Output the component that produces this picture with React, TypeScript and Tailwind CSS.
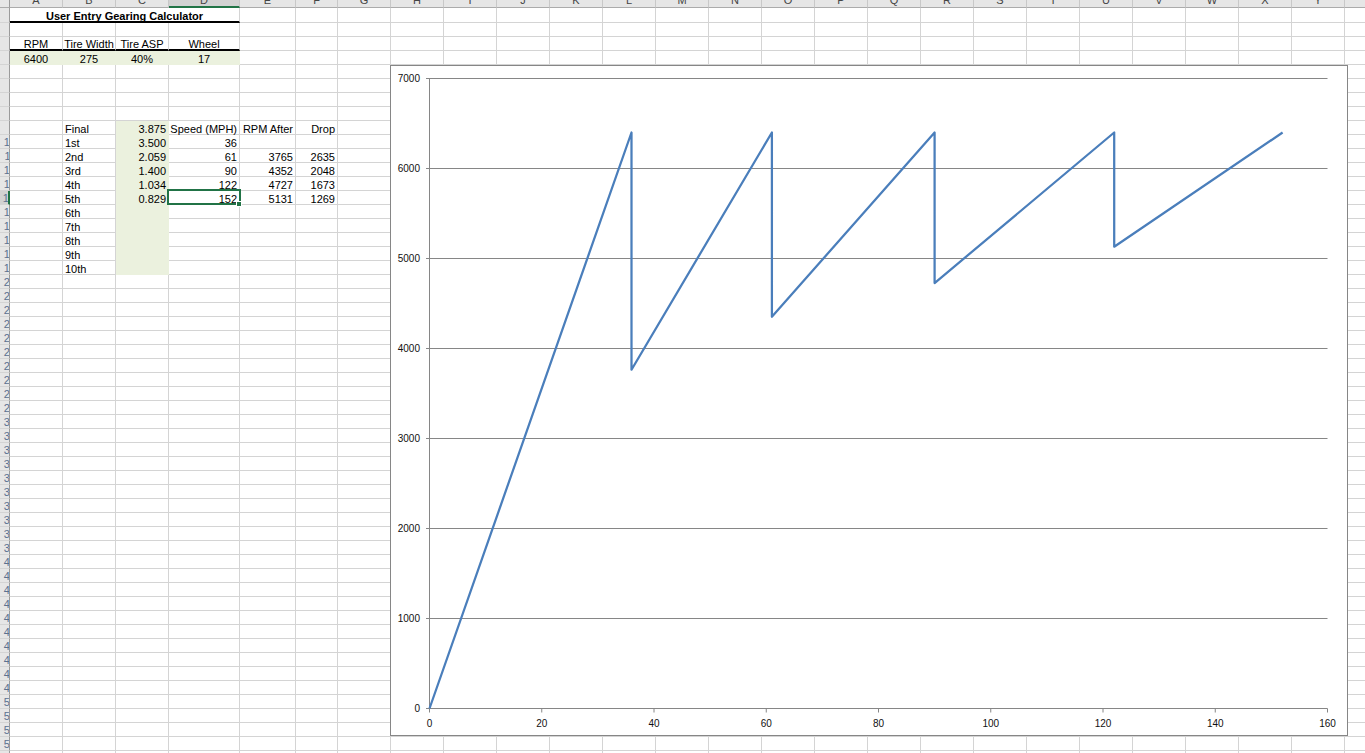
import clsx from "clsx";

type Col = { key: string; w: string };
type Cell = { v: string; align?: "l" | "c" | "r" };

const COLS: Col[] = [
  { key: "A", w: "w-[53px]" },
  { key: "B", w: "w-[53px]" },
  { key: "C", w: "w-[53px]" },
  { key: "D", w: "w-[71px]" },
  { key: "E", w: "w-[56px]" },
  { key: "F", w: "w-[42px]" },
  ..."GHIJKLMNOPQRSTUVWXYZ".split("").map((k) => ({ key: k, w: "w-[53px]" })),
];

const ROW_COUNT = 54;
const SELECTED = { col: "D", row: 14 };

const input = { rpm: 6400, width: 275, aspect: "40%", wheel: 17 };

const gears = [
  { name: "1st", ratio: "3.500", speed: 36 },
  { name: "2nd", ratio: "2.059", speed: 61, after: 3765, drop: 2635 },
  { name: "3rd", ratio: "1.400", speed: 90, after: 4352, drop: 2048 },
  { name: "4th", ratio: "1.034", speed: 122, after: 4727, drop: 1673 },
  { name: "5th", ratio: "0.829", speed: 152, after: 5131, drop: 1269 },
  { name: "6th", ratio: "" },
  { name: "7th", ratio: "" },
  { name: "8th", ratio: "" },
  { name: "9th", ratio: "" },
  { name: "10th", ratio: "" },
];

const cells: Record<string, Cell> = {
  A3: { v: "RPM", align: "c" },
  B3: { v: "Tire Width", align: "c" },
  C3: { v: "Tire ASP", align: "c" },
  D3: { v: "Wheel", align: "c" },
  A4: { v: String(input.rpm), align: "c" },
  B4: { v: String(input.width), align: "c" },
  C4: { v: input.aspect, align: "c" },
  D4: { v: String(input.wheel), align: "c" },
  B9: { v: "Final" },
  C9: { v: "3.875", align: "r" },
  D9: { v: "Speed (MPH)", align: "r" },
  E9: { v: "RPM After", align: "r" },
  F9: { v: "Drop", align: "r" },
};

gears.forEach((g, i) => {
  const r = 10 + i;
  cells[`B${r}`] = { v: g.name };
  if (g.ratio) cells[`C${r}`] = { v: g.ratio, align: "r" };
  if (g.speed) cells[`D${r}`] = { v: String(g.speed), align: "r" };
  if (g.after) cells[`E${r}`] = { v: String(g.after), align: "r" };
  if (g.drop) cells[`F${r}`] = { v: String(g.drop), align: "r" };
});

const isFilled = (col: string, row: number) =>
  (row === 4 && "ABCD".includes(col)) || (col === "C" && row >= 9 && row <= 19);

const font = "font-['Liberation_Sans',Arial,sans-serif]";

function ColumnHeader() {
  return (
    <div className="flex h-[8px] shrink-0">
      <div className="h-full w-[10px] shrink-0 border-r border-b border-r-[#9b9b9b] border-b-[#ababab] bg-[#e6e6e6]" />
      {COLS.map((c) => {
        const sel = c.key === SELECTED.col;
        return (
          <div
            key={c.key}
            className={clsx(
              "flex h-full shrink-0 justify-center overflow-hidden border-r border-r-[#c8c8c8]",
              c.w,
              sel ? "border-b-2 border-b-[#217346] bg-[#d2d2d2]" : "border-b border-b-[#ababab] bg-[#e6e6e6]"
            )}
          >
            <span className="-mt-[7px] text-[11px] leading-[14px] text-[#444]">{c.key}</span>
          </div>
        );
      })}
    </div>
  );
}

function RowHeader({ row }: { row: number }) {
  const sel = row === SELECTED.row;
  return (
    <div
      className={clsx(
        "flex h-full w-[10px] shrink-0 items-end justify-end overflow-hidden border-b border-b-[#d4d4d4]",
        sel ? "border-r-2 border-r-[#217346] bg-[#d2d2d2]" : "border-r border-r-[#9b9b9b] bg-[#e6e6e6]"
      )}
    >
      <span className="-mr-[7px] text-[11px] leading-[11px] text-[#5b7190]">{row}</span>
    </div>
  );
}

function GridCell({ col, row }: { col: Col; row: number }) {
  const c = cells[col.key + row];
  const filled = isFilled(col.key, row);
  const thick = row === 3 && "ABCD".includes(col.key);
  const sel = col.key === SELECTED.col && row === SELECTED.row;
  return (
    <div
      className={clsx(
        "relative flex h-full shrink-0 items-end whitespace-nowrap border-r px-[2px] text-[11px] leading-[9px] text-black",
        col.w,
        filled ? "border-r-[#ebf1de] bg-[#ebf1de]" : "border-r-[#d4d4d4]",
        thick ? "border-b-2 border-b-black" : filled ? "border-b border-b-[#ebf1de]" : "border-b border-b-[#d4d4d4]",
        c?.align === "c" && "justify-center",
        c?.align === "r" && "justify-end"
      )}
    >
      {c?.v}
      {sel && (
        <div className="pointer-events-none absolute -top-[2px] -right-[2px] -bottom-[1px] -left-[2px] z-10 border-2 border-[#217346]">
          <div className="absolute -right-[3px] -bottom-[4px] h-[6px] w-[6px] border border-white bg-[#217346]" />
        </div>
      )}
    </div>
  );
}

function TitleRow() {
  return (
    <div className="flex h-[15px] shrink-0">
      <RowHeader row={1} />
      <div className="flex h-full w-[230px] shrink-0 items-end justify-center border-r border-b-2 border-r-[#d4d4d4] border-b-black text-[11px] leading-[10px] font-bold text-black">
        User Entry Gearing Calculator
      </div>
      {COLS.slice(4).map((c) => (
        <GridCell key={c.key} col={c} row={1} />
      ))}
    </div>
  );
}

// RPM trace: climb from 0 to shift point, drop to the next gear's RPM at the same speed
function RpmChart() {
  const xOf = (mph: number) => 38.5 + mph * 5.6125;
  const yOf = (rpm: number) => 642.5 - rpm * 0.09;

  const pts: [number, number][] = [[0, 0]];
  gears.forEach((g, i) => {
    if (!g.speed) return;
    pts.push([g.speed, input.rpm]);
    const next = gears[i + 1];
    if (next?.after) pts.push([g.speed, next.after]);
  });
  const d = pts.map(([x, y], i) => `${i ? "L" : "M"}${xOf(x).toFixed(1)} ${yOf(y).toFixed(1)}`).join(" ");

  const yTicks = [0, 1000, 2000, 3000, 4000, 5000, 6000, 7000];
  const xTicks = [0, 20, 40, 60, 80, 100, 120, 140, 160];

  return (
    <div className="absolute top-[65px] left-[390px] z-20 h-[671px] w-[958px] border border-[#868686] bg-white">
      <svg width="956" height="669" className="block" fontFamily="'Liberation Sans', Arial, sans-serif" fontSize="10">
        {yTicks.map((t) => (
          <g key={t}>
            <line x1={35} x2={xOf(160)} y1={yOf(t)} y2={yOf(t)} stroke="#868686" strokeWidth="1" />
            <text x={29} y={yOf(t) + 3.5} textAnchor="end" fill="#111">
              {t}
            </text>
          </g>
        ))}
        <line x1={38.5} x2={38.5} y1={yOf(7000)} y2={yOf(0)} stroke="#868686" strokeWidth="1" />
        {xTicks.map((t) => (
          <g key={t}>
            <line x1={xOf(t)} x2={xOf(t)} y1={yOf(0)} y2={yOf(0) + 4} stroke="#868686" strokeWidth="1" />
            <text x={xOf(t)} y={yOf(0) + 18} textAnchor="middle" fill="#111">
              {t}
            </text>
          </g>
        ))}
        <path d={d} fill="none" stroke="#4a7ebb" strokeWidth="2.25" strokeLinejoin="round" />
      </svg>
    </div>
  );
}

export default function App() {
  const rows = Array.from({ length: ROW_COUNT - 1 }, (_, i) => i + 2);
  return (
    <div className={clsx("relative h-[753px] w-[1365px] overflow-hidden bg-white", font)}>
      <ColumnHeader />
      <TitleRow />
      {rows.map((r) => (
        <div key={r} className="flex h-[14px] shrink-0">
          <RowHeader row={r} />
          {COLS.map((c) => (
            <GridCell key={c.key} col={c} row={r} />
          ))}
        </div>
      ))}
      <RpmChart />
    </div>
  );
}
